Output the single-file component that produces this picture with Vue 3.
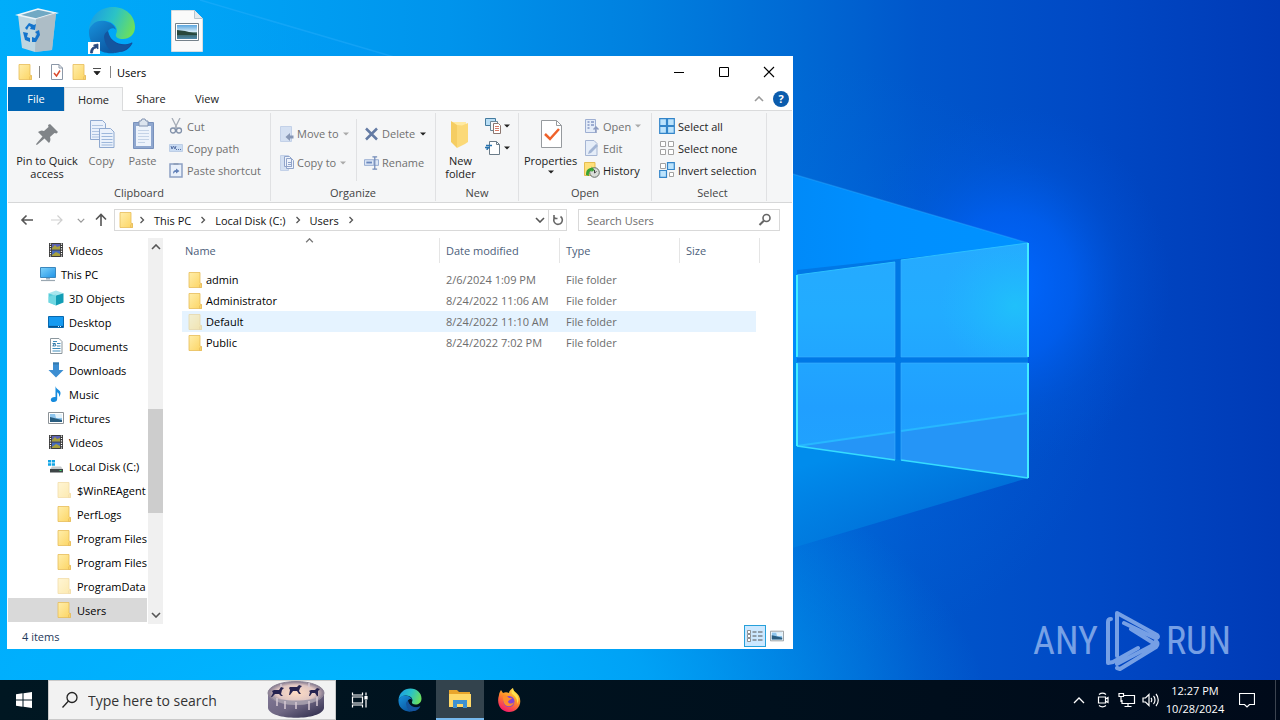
<script setup>
import { ref } from 'vue'

const query = ref('')
const webQuery = ref('')

const tree = [
  { icon: 'video', label: 'Videos', level: 2 },
  { icon: 'pc', label: 'This PC', level: 1 },
  { icon: 'cube', label: '3D Objects', level: 2 },
  { icon: 'desktop', label: 'Desktop', level: 2 },
  { icon: 'document', label: 'Documents', level: 2 },
  { icon: 'download', label: 'Downloads', level: 2 },
  { icon: 'music', label: 'Music', level: 2 },
  { icon: 'picture', label: 'Pictures', level: 2 },
  { icon: 'video', label: 'Videos', level: 2 },
  { icon: 'drive', label: 'Local Disk (C:)', level: 2 },
  { icon: 'folder', label: '$WinREAgent', level: 3, faded: true },
  { icon: 'folder', label: 'PerfLogs', level: 3 },
  { icon: 'folder', label: 'Program Files', level: 3 },
  { icon: 'folder', label: 'Program Files', level: 3 },
  { icon: 'folder', label: 'ProgramData', level: 3, faded: true },
  { icon: 'folder', label: 'Users', level: 3, current: true },
]

const files = [
  { name: 'admin', date: '2/6/2024 1:09 PM' },
  { name: 'Administrator', date: '8/24/2022 11:06 AM' },
  { name: 'Default', date: '8/24/2022 11:10 AM', faded: true, hover: true },
  { name: 'Public', date: '8/24/2022 7:02 PM' },
]

const crumbs = ['This PC', 'Local Disk (C:)', 'Users']
</script>

<template>
  <div class="screen">
    <svg class="sprites" aria-hidden="true">
      <defs>
        <linearGradient id="gFolder" x1="0" y1="0" x2="1" y2="1">
          <stop offset="0" stop-color="#ffeeab" /><stop offset="1" stop-color="#fcd462" />
        </linearGradient>
        <linearGradient id="gBlue" x1="0" y1="0" x2="1" y2="1">
          <stop offset="0" stop-color="#7fd3fb" /><stop offset="1" stop-color="#1f93e6" />
        </linearGradient>
        <linearGradient id="gEdgeTop" x1="0" y1="0.3" x2="1" y2="0.6">
          <stop offset="0" stop-color="#1b9de2" /><stop offset="0.5" stop-color="#2bc3c6" /><stop offset="1" stop-color="#6de05a" />
        </linearGradient>
        <linearGradient id="gEdgeLeft" x1="0" y1="0" x2="0.6" y2="1">
          <stop offset="0" stop-color="#1793dd" /><stop offset="1" stop-color="#0c59a4" />
        </linearGradient>
        <linearGradient id="gFox" x1="0.8" y1="0" x2="0.3" y2="1">
          <stop offset="0" stop-color="#ffe14a" /><stop offset="0.45" stop-color="#ff9127" /><stop offset="1" stop-color="#f5156c" />
        </linearGradient>
        <linearGradient id="gSky" x1="0" y1="0" x2="0" y2="1">
          <stop offset="0" stop-color="#5aa5de" /><stop offset="0.5" stop-color="#d9ecf7" /><stop offset="0.55" stop-color="#375f55" /><stop offset="1" stop-color="#4d87aa" />
        </linearGradient>
        <symbol id="folder" viewBox="0 0 16 16">
          <path d="M2 .5h11v10.500l1.500 1v3.500H2z" fill="url(#gFolder)" stroke="#e7bd59" stroke-width=".8" />
          <path d="M12.500 15.500v-2.500l2-2v4.500z" fill="#f8d170" stroke="#e0b552" stroke-width=".5" />
        </symbol>
        <symbol id="caret" viewBox="0 0 6 4"><path d="M0 .5h6L3 3.500z" fill="currentColor" /></symbol>
        <symbol id="chev" viewBox="0 0 6 8"><path d="M1.500 1l3 3-3 3" fill="none" stroke="currentColor" stroke-width="1.300" /></symbol>
        <symbol id="down" viewBox="0 0 10 6"><path d="M1 1l4 4 4-4" fill="none" stroke="currentColor" stroke-width="1.600" /></symbol>
        <symbol id="up" viewBox="0 0 10 6"><path d="M1 5l4-4 4 4" fill="none" stroke="currentColor" stroke-width="1.600" /></symbol>
        <symbol id="lens" viewBox="0 0 16 16"><circle cx="9.500" cy="6" r="3.500" fill="none" stroke="currentColor" stroke-width="1.600" /><path d="M6.800 8.700L2.500 13" stroke="currentColor" stroke-width="2" /></symbol>
        <symbol id="video" viewBox="0 0 16 16">
          <path d="M1 1h14v14H1z" fill="#3b3b3b" /><path d="M4 2h8v5.500H4z" fill="#5b62b5" /><path d="M4 8.500h8V14H4z" fill="#486bbd" />
          <path d="M4 6l3-3 2 2 3-1v3.500H4zM4 13l4-3 4 2v2H4z" fill="#a8a03c" />
          <path d="M2.500 1.500v13M13.500 1.500v13" stroke="#fff" stroke-width="1.200" stroke-dasharray="1.200 1.200" />
        </symbol>
        <symbol id="pc" viewBox="0 0 16 16"><path d="M.5 1.500h15v10H.5z" fill="url(#gBlue)" stroke="#3b87bd" /><path d="M6 12h4v1.500H6z" fill="#9bb1c2" /><path d="M1 14.500h14" stroke="#9aa7b1" stroke-width="1.200" /></symbol>
        <symbol id="cube" viewBox="0 0 16 16"><path d="M8 .5l7.500 2.700L8 5.500.5 3.200z" fill="#a9e6ee" /><path d="M.5 3.200L8 5.500v10L.5 12.500z" fill="#57cddb" /><path d="M8 5.500l7.500-2.300v9.300L8 15.500z" fill="#129db5" /><path d="M.5 7L8 4v11.500L.5 12.500z" fill="#7edde6" opacity=".6" /></symbol>
        <symbol id="desktop" viewBox="0 0 16 16"><path d="M.5 2.500h15v11H.5z" fill="#159af1" stroke="#0868ae" /><path d="M1 12.500h14" stroke="#07518d" stroke-width="1.200" /><path d="M10 12.500h4" stroke="#d2edff" stroke-dasharray="1 1" /></symbol>
        <symbol id="document" viewBox="0 0 16 16"><path d="M2.500.5H11L14 3.500v12H2.500z" fill="#fff" stroke="#8b979e" /><path d="M4.500 5.500h3M9 5.500h3.500M4.500 8h3M9 8h3.500M4.500 10.500h8M4.500 13h8M5 3.500h4" stroke="#3f8dbc" /><path d="M5 8l1.500-3L8 8" stroke="#286e9d" fill="none" /></symbol>
        <symbol id="download" viewBox="0 0 16 16"><path d="M5 .5h6V8h4.500L8 15.500.5 8H5z" fill="#3c8ed2" /><path d="M5 .5h6v2H5z" fill="#347aae" /></symbol>
        <symbol id="music" viewBox="0 0 16 16"><path d="M7.500 0c.5 3.500 5.500 4 5 7.500-.1 1.500-.8 2.500-1.500 3.500.5-2.500-.3-4-1.800-4.700V13c0 1.700-1.500 3-3.500 3-1.700 0-2.900-.9-2.900-2.300 0-1.700 2-3 4.700-2.700z" fill="#168bdd" /></symbol>
        <symbol id="picture" viewBox="0 0 16 16"><path d="M.5 2.500h15v11H.5z" fill="#fff" stroke="#8c9297" /><path d="M2 4h12v8H2z" fill="#8fc6ee" /><path d="M7 4h7v4H8z" fill="#e3f2fb" /><path d="M2 7l4 1 8 2v2H2z" fill="#295d80" /></symbol>
        <symbol id="drive" viewBox="0 0 16 16"><path d="M0 2h3v2.500H0zM3.700 2H7v2.500H3.700zM0 5.200h3v2.500H0zM3.700 5.200H7v2.500H3.700z" fill="#13a5e5" /><path d="M4 8.500h9l2 3H2z" fill="#c6c9cb" /><path d="M2 11h13v3.500H2z" fill="#3e4547" /><path d="M11.500 12.500h2" stroke="#3cda6c" /></symbol>
        <symbol id="edge" viewBox="0 0 48 48">
          <path d="M1 24C2 10 12 1 25 1c13 0 22 9 22 20 0 8-6 12-12 12-5 0-8-2-7-5 2-3 1-9-6-12C14 13 5 16 1 24z" fill="url(#gEdgeTop)" />
          <path d="M1 24c3-8 11-11 19-8 4 1 7 4 8 8-2-3-6-2-8 1-5 7-1 17 7 22-15 2-27-8-26-23z" fill="url(#gEdgeLeft)" />
          <path d="M20 25c-5 7-1 16 6 19 7 4 14 1 18-6 1-1 0-2-1-1-5 2-12 2-17-2-4-3-7-6-6-10z" fill="#134c9b" />
          <path d="M16 31c1 9 6 14 11 16 8-1 14-5 17-10-7 4-20 4-24-12-2 1-4 3-4 6z" fill="#14559f" />
        </symbol>
        <symbol id="file" viewBox="0 0 16 16"><path d="M2.500.5H10L13.500 4v11.500h-11z" fill="#fff" stroke="#8c98a8" /><path d="M10 .5V4h3.500" fill="none" stroke="#8c98a8" /></symbol>
      </defs>
    </svg>

    <main class="workspace">
      <svg class="wallpaper" viewBox="0 0 1280 720" preserveAspectRatio="none" aria-hidden="true">
        <defs>
          <linearGradient id="wBase" x1="0" y1="0" x2="1" y2="0">
            <stop offset="0" stop-color="#00aefa" /><stop offset=".16" stop-color="#00a4f6" /><stop offset=".35" stop-color="#0094ec" /><stop offset=".5" stop-color="#0080df" />
            <stop offset=".63" stop-color="#0068d3" /><stop offset=".72" stop-color="#0056cb" /><stop offset=".85" stop-color="#0049c5" /><stop offset="1" stop-color="#003ab6" />
          </linearGradient>
          <radialGradient id="wGlow"><stop offset="0" stop-color="#0067ff" /><stop offset=".4" stop-color="#0062f8" stop-opacity=".7" /><stop offset=".7" stop-color="#005ce8" stop-opacity=".25" /><stop offset="1" stop-color="#0056dc" stop-opacity="0" /></radialGradient>
          <radialGradient id="wHaze"><stop offset="0" stop-color="#0070f0" stop-opacity=".55" /><stop offset="1" stop-color="#0068e0" stop-opacity="0" /></radialGradient>
          <radialGradient id="wLow"><stop offset="0" stop-color="#00b8ff" /><stop offset=".5" stop-color="#00b0ff" stop-opacity=".7" /><stop offset="1" stop-color="#00a0f5" stop-opacity="0" /></radialGradient>
          <linearGradient id="wBeam" gradientUnits="userSpaceOnUse" x1="250" y1="0" x2="1028" y2="0"><stop offset="0" stop-color="#0098fa" stop-opacity=".05" /><stop offset=".5" stop-color="#0090fb" stop-opacity=".6" /><stop offset=".8" stop-color="#008fff" /><stop offset="1" stop-color="#0092ff" /></linearGradient>
          <linearGradient id="wBeamLow" gradientUnits="userSpaceOnUse" x1="850" y1="450" x2="900" y2="600"><stop offset="0" stop-color="#008cec" /><stop offset=".5" stop-color="#007ee0" stop-opacity=".7" /><stop offset="1" stop-color="#0078dc" stop-opacity=".1" /></linearGradient>
          <linearGradient id="wPane" x1="0" y1="0" x2="0" y2="1"><stop offset="0" stop-color="#26aaff" /><stop offset=".3" stop-color="#22acff" /><stop offset=".7" stop-color="#209fff" /><stop offset="1" stop-color="#21a4fd" /></linearGradient>
          <radialGradient id="wShine" cx=".9" cy=".55" r=".6"><stop offset="0" stop-color="#20c0fa" /><stop offset="1" stop-color="#20b7ff" stop-opacity="0" /></radialGradient>
        </defs>
        <path d="M0 0h1280v720H0z" fill="url(#wBase)" />
        <ellipse cx="800" cy="360" rx="320" ry="300" fill="url(#wHaze)" />
        <ellipse cx="330" cy="720" rx="660" ry="330" fill="url(#wLow)" />
        <ellipse cx="1010" cy="285" rx="160" ry="180" fill="url(#wGlow)" />
        <path d="M1028 243L200 0H0v430l1028-70z" fill="url(#wBeam)" />
        <path d="M1028 478V360H600v245z" fill="url(#wBeamLow)" />
        <path d="M200 0l828 243" stroke="#3db5ff" stroke-opacity=".3" stroke-width="1.500" fill="none" />
        <path d="M797 270l231-25v232l-231-31z" fill="#0078e6" />
        <path d="M797 275l98-13v95h-98zM901 260l127-17v114H901zM797 363h98v97l-98-14zM901 363h127v115l-127-18z" fill="url(#wPane)" />
        <path d="M901 260l127-17v114H901z" fill="url(#wShine)" />
        <path d="M797 446l98-14v28zM901 431l127-18v65l-127-18z" fill="#2595f7" />
        <path d="M797 446l98-14M901 431l127-18" stroke="#27b8ff" stroke-width="2" />
        <path d="M797 446l98 14M901 460l127 18" stroke="#36dcfe" stroke-width="1.500" />
        <path d="M1028 243l-127 17M895 262l-98 13" stroke="#2cc0ff" />
        <path d="M1028 243v114M1028 363v115M797 275v82M797 363v83" stroke="#44ecff" stroke-width="2" />
        <path d="M797 357h98v-95M901 260v97h127M895 460v-97h-98M1028 363H901v97" fill="none" stroke="#3cb3ff" stroke-opacity=".6" />
      </svg>

      <div class="shortcuts">
        <button class="shortcut" aria-label="Recycle Bin">
          <svg width="48" height="48" viewBox="0 0 48 48">
            <path d="M5 9l20-6 18 4-4 37-17 2-13-4z" fill="#d2dade" opacity=".9" />
            <path d="M5 9l18 4 20-6-18-4z" fill="#71a9c4" stroke="#edf5f9" stroke-width="1.500" />
            <path d="M23 13l20-6-4 37-17 2z" fill="#a9b6bf" opacity=".8" />
            <path d="M12 22l4-5 5 2 2-1-1 6-5-1 1-2-2-1-2 4zM10 26l5 1-1 4 3 1v4l-5-2zM19 36v-5l3 1 2-4-2-2 4-2 1 5-4 7z" fill="#1474cc" />
          </svg>
        </button>
        <button class="shortcut edge-shortcut" aria-label="Microsoft Edge">
          <svg width="48" height="48"><use href="#edge" /></svg>
          <svg class="link-badge" width="12" height="12" viewBox="0 0 12 12"><path d="M0 0h12v12H0z" fill="#fff" /><path d="M2.500 11C2.500 7 4 5 7 4.500L5.500 3 10 2v5L8.500 5.800C5.500 6.500 4.500 8 4.500 11z" fill="#27477e" stroke="#27477e" stroke-width=".8" /></svg>
        </button>
        <button class="shortcut" aria-label="Image file">
          <svg width="48" height="48" viewBox="0 0 48 48">
            <path d="M8.500 4.500h23l8 8v33h-31z" fill="#fafafa" stroke="#d8dde0" /><path d="M31.500 4.500v8h8" fill="#e3e9ed" stroke="#b7c5ce" />
            <path d="M12.500 17.500h23v17h-23z" fill="#fff" stroke="#75818a" /><path d="M14 19h20v14H14z" fill="url(#gSky)" /><path d="M14 24l8 1 12 3v1H14z" fill="#28473c" />
          </svg>
        </button>
      </div>

      <section class="window" aria-label="Users">
        <header class="titlebar">
          <svg width="16" height="16"><use href="#folder" /></svg>
          <i class="bar"></i>
          <button class="quick" aria-label="Properties"><svg width="16" height="16"><use href="#file" /><path d="M5 9l2.500 3L11 6.500" fill="none" stroke="#d9492b" stroke-width="1.500" /></svg></button>
          <button class="quick" aria-label="New folder"><svg width="16" height="16"><use href="#folder" /></svg></button>
          <button class="quick narrow" aria-label="Customize"><svg width="8" height="8" viewBox="0 0 8 8"><path d="M0 .5h8M1 3.500h6L4 7z" stroke="#222" stroke-width=".8" fill="#222" /></svg></button>
          <i class="bar"></i>
          <h1>Users</h1>
          <div class="captions">
            <button aria-label="Minimize"><svg width="12" height="12"><path d="M1 6.500h10" stroke="#000" /></svg></button>
            <button aria-label="Maximize"><svg width="12" height="12"><path d="M1.500 1.500h9v9h-9z" fill="none" stroke="#000" /></svg></button>
            <button aria-label="Close"><svg width="12" height="12"><path d="M1 1l10 10M11 1L1 11" stroke="#000" stroke-width="1.100" /></svg></button>
          </div>
        </header>

        <nav class="tabs">
          <button class="file-tab">File</button>
          <button class="active">Home</button>
          <button>Share</button>
          <button>View</button>
          <span class="grow"></span>
          <button class="mini" aria-label="Collapse ribbon"><svg width="10" height="6" class="grey"><use href="#up" /></svg></button>
          <button class="help" aria-label="Help">?</button>
        </nav>

        <div class="ribbon">
          <section class="group clipboard">
            <div class="tools">
              <button class="big pin"><svg width="32" height="32" viewBox="0 0 32 32"><path d="M19 6l8 8-1.500 1.500-2-.5-4.500 4c1 3 0 5-1 6l-4.500-4.500-7 6-1.500.5.5-1.500 6-7-4.500-4.500c2-1.500 4-2 6-1l4.500-4-.5-2z" fill="#808488" /></svg><span>Pin to Quick access</span></button>
              <button class="big copy off"><svg width="32" height="32" viewBox="0 0 32 32" fill="#eaf1fb" stroke="#8fa9d0"><path d="M4.500 2.500h12l3 3v16h-15z" /><path d="M6 7.500h11M6 10.500h11M6 13.500h11M6 16.500h11M6 19h11" stroke="#b0c5e2" /><path d="M13.500 10.500h11l3.500 3.500v15.500H13.500z" /><path d="M15.500 15.500h11M15.500 18.500h11M15.500 21.500h11M15.500 24.500h11M15.500 27h11" stroke="#9db7db" /></svg><span>Copy</span></button>
              <button class="big paste off"><svg width="32" height="32" viewBox="0 0 32 32"><path d="M6.500 4.500h20v26h-20z" fill="#8fa7cf" stroke="#7891bc" /><path d="M9 8h15v20H9z" fill="#edf3fb" /><path d="M12 3h2l1-2h3l1 2h2v5h-9z" fill="#dce4ee" stroke="#8092b0" /><path d="M11 12.500h11M11 15.500h11M11 18.500h11M11 21.500h11M11 24.500h7" stroke="#c4d3e7" /></svg><span>Paste</span></button>
              <div class="stack">
                <button class="small off"><svg width="16" height="16" viewBox="0 0 16 16" fill="none" stroke="#8392aa" stroke-width="1.300"><path d="M4 0l5.500 11M12 0L6.500 11" stroke="#a5acb6" /><circle cx="5" cy="12.500" r="2.500" /><circle cx="11" cy="12.500" r="2.500" /></svg>Cut</button>
                <button class="small off"><svg width="16" height="16" viewBox="0 0 16 16"><path d="M1.500 4.500h13v7h-13z" fill="#cadcf3" stroke="#bdcee6" /><path d="M3 6l1 3 1.500-3L7 9l1-3" fill="none" stroke="#5771a5" /><path d="M8 9.500h6" stroke="#5771a5" stroke-dasharray="1 1" /></svg>Copy path</button>
                <button class="small off"><svg width="16" height="16" viewBox="0 0 16 16"><path d="M2 2h12v13H2z" fill="#e9f0fa" stroke="#8ca0c4" stroke-width="1.500" /><path d="M5.500 1h5v2h-5z" fill="#91a1bb" /><path d="M5 12c0-3 1-4 3-4V6.500L11.500 9 8 11.500V10c-1 0-2 .5-3 2z" fill="#6281b8" /></svg>Paste shortcut</button>
              </div>
            </div>
            <h2>Clipboard</h2>
          </section>

          <section class="group organize">
            <div class="tools">
              <div class="stack wide">
                <button class="small off"><svg width="14" height="16" viewBox="0 0 14 16"><path d="M.5.5h11v15H.5z" fill="#d4e0f2" stroke="#c3d1e8" /><path d="M13.500 9.500v3H10V15l-4.500-4L10 7v2.500z" fill="#8797b5" /></svg>Move to<svg class="arr" width="6" height="4"><use href="#caret" /></svg></button>
                <button class="small off"><svg width="14" height="16" viewBox="0 0 14 16"><path d="M.5.5h8v15h-8z" fill="#d4e0f2" stroke="#c3d1e8" /><path d="M4.500 1.500h5l2 2v8h-7zM6.500 3.500h5l2 2v8h-7z" fill="#eef3fb" stroke="#91a4ca" /><path d="M8 7.500h4M8 9.500h4M8 11.500h4" stroke="#91a4ca" /></svg>Copy to<svg class="arr" width="6" height="4"><use href="#caret" /></svg></button>
              </div>
              <div class="stack wide second">
                <button class="small off dark-arr"><svg width="15" height="14" viewBox="0 0 14 14"><path d="M1.500 1.500l11 11M12.500 1.500l-11 11" stroke="#647ba4" stroke-width="2.500" /></svg>Delete<svg class="arr" width="6" height="4"><use href="#caret" /></svg></button>
                <button class="small off"><svg width="15" height="16" viewBox="0 0 16 16"><path d="M.5 4.500h10v6H.5zM11 4.500h4.500v6H11" fill="#dce7f6" stroke="#91a7cf" /><path d="M2.500 7.500h6" stroke="#6a87bc" stroke-width="2" /><path d="M9 1.500h5M11.500 1.500v13M9 14.500h5" stroke="#7089b7" stroke-width="1.300" /></svg>Rename</button>
              </div>
            </div>
            <h2>Organize</h2>
          </section>

          <section class="group new">
            <div class="tools">
              <button class="big"><svg width="32" height="32" viewBox="0 0 32 32"><path d="M6 4h15v21H7z" fill="#ffeaa2" /><path d="M6 3l6 4v23l-6-6z" fill="#f5cd62" /><path d="M12 7l5 .5L23 5v19l-3 2-8 4z" fill="#fbd978" /></svg><span>New folder</span></button>
              <div class="stack">
                <button class="small" aria-label="New item"><svg width="16" height="16" viewBox="0 0 16 16"><path d="M.5.5h10v7H.5z" fill="#b9def5" stroke="#447b9f" /><path d="M5.500 3.500h7v9h-7z" fill="#f7f9fb" stroke="#6d8797" /><path d="M8.500 5.500h5l2 2v8h-7z" fill="#fff" stroke="#8c7770" /><path d="M10 8.500h4M10 10.500h4M10 12.500h4" stroke="#da7a65" /></svg><svg class="arr" width="6" height="4"><use href="#caret" /></svg></button>
                <button class="small" aria-label="Easy access"><svg width="16" height="16" viewBox="0 0 16 16"><path d="M4.500 1.500h7l3 3v10h-10z" fill="#fff" stroke="#6b7c89" /><path d="M11.500 1.500v3h3" fill="none" stroke="#6b7c89" /><path d="M1 5.500h6M0 7.500h5M2 10c0-2 1-2.500 3-2.500" stroke="#2873ae" stroke-width="1.300" fill="none" /></svg><svg class="arr" width="6" height="4"><use href="#caret" /></svg></button>
              </div>
            </div>
            <h2>New</h2>
          </section>

          <section class="group open">
            <div class="tools">
              <button class="big props"><svg width="32" height="32" viewBox="0 0 32 32"><path d="M6.500 2.500h15l5 5v22h-20z" fill="#fff" stroke="#969a9e" /><path d="M21.500 2.500v5h5" fill="none" stroke="#969a9e" /><path d="M10 16l5 5 9-10" fill="none" stroke="#ef622b" stroke-width="2.500" /></svg><span>Properties</span><svg width="6" height="4"><use href="#caret" /></svg></button>
              <div class="stack">
                <button class="small off"><svg width="16" height="16" viewBox="0 0 16 16"><path d="M1.500 1.500h10v13h-10z" fill="#e4ecf8" stroke="#9eafd2" /><path d="M3.500 4h2M7 4h3M3.500 7h2M7 7h3M3.500 10h2" stroke="#8497c4" stroke-width="1.500" /><path d="M12 15V9M9.500 11.500L12 9l2.500 2.500" fill="none" stroke="#8d9cc1" stroke-width="1.500" /></svg>Open<svg class="arr" width="6" height="4"><use href="#caret" /></svg></button>
                <button class="small off"><svg width="16" height="16" viewBox="0 0 16 16"><path d="M1.500.5H10L13 3.500v12H1.500z" fill="#e5edf8" stroke="#a5b5d3" /><path d="M4 14l1-3 7-7 2 2-7 7z" fill="#a3b5d4" /></svg>Edit</button>
                <button class="small"><svg width="16" height="16" viewBox="0 0 16 16"><path d="M.5.5H11v13H.5z" fill="#ffe07a" stroke="#e5bd51" /><circle cx="10.500" cy="10.500" r="4.800" fill="#d9ddd9" stroke="#666f69" /><path d="M10.500 8v3l2-1.500" fill="none" stroke="#444" /><path d="M2 13c0-5 2-7 5.500-7V4.500L10.500 8 7.500 10V8.500C5 9 4.500 11 5 14z" fill="#39a334" /></svg>History</button>
              </div>
            </div>
            <h2>Open</h2>
          </section>

          <section class="group select">
            <div class="tools">
              <div class="stack">
                <button class="small"><svg width="16" height="16" viewBox="0 0 16 16"><path d="M.7.7h6.800v6.800H.7zM8.500.7h6.800v6.800H8.500zM.7 8.500h6.800v6.800H.7zM8.500 8.500h6.800v6.800H8.500z" fill="#bce3fc" stroke="#3385c9" stroke-width="1.200" /></svg>Select all</button>
                <button class="small"><svg width="16" height="16" viewBox="0 0 16 16"><path d="M1.500 1.500h5v5h-5zM9.500 1.500h5v5h-5zM1.500 9.500h5v5h-5zM9.500 9.500h5v5h-5z" fill="#fff" stroke="#a2a2a2" /></svg>Select none</button>
                <button class="small"><svg width="16" height="16" viewBox="0 0 16 16"><path d="M1.500 1.500h5v5h-5zM10.500 10.500h4v4h-4z" fill="#fff" stroke="#a2a2a2" /><path d="M8.500.7h6.800v6.800H8.500zM.7 8.500h6.800v6.800H.7z" fill="#bce3fc" stroke="#3385c9" stroke-width="1.200" /></svg>Invert selection</button>
              </div>
            </div>
            <h2>Select</h2>
          </section>
        </div>

        <div class="location">
          <button aria-label="Back"><svg width="14" height="12" viewBox="0 0 14 12"><path d="M13 6H2M6.500 1.500L2 6l4.500 4.500" fill="none" stroke="#555" stroke-width="1.600" /></svg></button>
          <button class="forward" aria-label="Forward"><svg width="14" height="12" viewBox="0 0 14 12"><path d="M1 6h11M7.500 1.500L12 6l-4.500 4.500" fill="none" stroke="#cfcfcf" stroke-width="1.200" /></svg></button>
          <button class="recent" aria-label="Recent locations"><svg width="8" height="5" class="grey"><use href="#down" /></svg></button>
          <button class="parent" aria-label="Up"><svg width="12" height="14" viewBox="0 0 12 14"><path d="M6 13V2M1 6.500L6 1.500l5 5" fill="none" stroke="#555" stroke-width="1.600" /></svg></button>
          <div class="address">
            <svg width="16" height="16"><use href="#folder" /></svg>
            <svg class="sep first" width="6" height="8"><use href="#chev" /></svg>
            <template v-for="crumb in crumbs" :key="crumb">
              <button class="crumb">{{ crumb }}</button><svg class="sep" width="6" height="8"><use href="#chev" /></svg>
            </template>
            <button class="history" aria-label="Previous locations"><svg width="10" height="6"><use href="#down" /></svg></button>
            <button class="refresh" aria-label="Refresh"><svg width="12" height="12" viewBox="0 0 12 12"><path d="M8.500 2.500A4.300 4.300 0 1 1 3 3M2 1v3.500h3.500" fill="none" stroke="#666" stroke-width="1.600" /></svg></button>
          </div>
          <label class="search"><input v-model="query" type="text" placeholder="Search Users" aria-label="Search Users" /><svg width="16" height="16"><use href="#lens" /></svg></label>
        </div>

        <div class="body">
          <aside class="tree">
            <a v-for="(node, i) in tree" :key="i" href="#" :class="['node', 'level' + node.level, { current: node.current, faded: node.faded }]">
              <svg width="16" height="16"><use :href="'#' + node.icon" /></svg><span>{{ node.label }}</span>
            </a>
          </aside>
          <div class="scroll">
            <svg width="10" height="6"><use href="#up" /></svg>
            <div class="track"><div class="thumb"></div></div>
            <svg width="10" height="6"><use href="#down" /></svg>
          </div>
          <div class="listing">
            <table>
              <colgroup><col class="c-name" /><col class="c-mid" /><col class="c-mid" /><col class="c-size" /></colgroup>
              <thead>
                <tr>
                  <th><span>Name</span><svg class="sort" width="9" height="5"><use href="#up" /></svg></th>
                  <th><span>Date modified</span></th><th><span>Type</span></th><th><span>Size</span></th>
                </tr>
              </thead>
              <tbody>
                <tr v-for="file in files" :key="file.name" :class="{ hover: file.hover, faded: file.faded }">
                  <td class="name"><svg width="16" height="16"><use href="#folder" /></svg>{{ file.name }}</td>
                  <td>{{ file.date }}</td><td>File folder</td><td></td>
                </tr>
              </tbody>
            </table>
          </div>
        </div>

        <footer class="status">
          <span>4 items</span>
          <button class="view on" aria-label="Details view"><svg width="16" height="14" viewBox="0 0 16 14"><path d="M.5 1.500h3v3h-3zM.5 5.500h3v3h-3zM.5 9.500h3v3h-3z" fill="#fff" stroke="#777" stroke-width=".8" /><path d="M5.500 3h4M11 3h4.500M5.500 7h4M11 7h4.500M5.500 11h4M11 11h4.500" stroke="#555" /></svg></button>
          <button class="view" aria-label="Large icons view"><svg width="14" height="14"><use href="#picture" /></svg></button>
        </footer>
      </section>

      <div class="brand">
        <span>ANY</span>
        <svg width="56" height="62" viewBox="0 0 56 62" fill="none" stroke="#8bb0ec" stroke-width="4" stroke-linejoin="round" stroke-linecap="round">
          <path d="M7 9c-2 0-3 1-3 3v41l5-1L34 38M13 46V3l40 22c2 2 0 4-2 3L20 13M13 54l38-20-24-15M13 58l3 1 36-22c2-2 2-4 0-6" />
        </svg>
        <span>RUN</span>
      </div>
    </main>

    <footer class="taskbar">
      <button class="start" aria-label="Start"><svg width="16" height="16" viewBox="0 0 16 16"><path d="M0 2.200l6.500-.9v6.200H0zM7.500 1.200L16 0v7.500H7.500zM0 8.500h6.500v6.200L0 13.800zM7.500 8.500H16V16l-8.500-1.200z" fill="#fff" /></svg></button>
      <label class="web-search">
        <svg width="18" height="18" viewBox="0 0 18 18"><circle cx="11" cy="6.500" r="5" fill="none" stroke="#222" stroke-width="1.300" /><path d="M7.500 10L1.500 16.500" stroke="#222" stroke-width="1.300" /></svg>
        <input v-model="webQuery" type="text" placeholder="Type here to search" aria-label="Type here to search" />
        <svg class="drum" width="58" height="38" viewBox="0 0 58 38">
          <defs><linearGradient id="gDrum" x1="0" x2="1" y1="0" y2="1"><stop offset="0" stop-color="#817896" /><stop offset=".5" stop-color="#6f6783" /><stop offset="1" stop-color="#272546" /></linearGradient>
            <radialGradient id="gRim"><stop offset="0" stop-color="#ffdcc4" /><stop offset=".7" stop-color="#dfc6c3" /><stop offset="1" stop-color="#83788f" /></radialGradient></defs>
          <path d="M1 12v15c2 13 54 13 56 0V12z" fill="url(#gDrum)" />
          <ellipse cx="29" cy="12" rx="28" ry="11.500" fill="url(#gRim)" stroke="#8c8395" />
          <path d="M4 15c8 6 42 6 50 0-6 12-44 12-50 0z" fill="#a29baa" />
          <path d="M10 17v8M18 20v8M29 21v7M42 20v9M50 16v9M14 3v4M42 2v4" stroke="#d6c9d4" stroke-width="1.500" />
          <path d="M5 10l2-1h5l2-3 3 1-2 2-1 4 2 2h-2l-2-2-4 0-3 3H4l2-4zM22 7l1-1h7l2-2 3 1-2 2-1 3 2 3h-2l-2-3h-4l-3 4h-1l1-5zM42 10l2-1h4l2-2 3 1-2 2v5h-1l-2-3h-3l-2 3h-1l1-4z" fill="#262350" />
        </svg>
      </label>
      <button aria-label="Task View"><svg width="18" height="16" viewBox="0 0 18 16" fill="none" stroke="#fff" stroke-width="1.200"><path d="M1.500.5v2.500h10V.5M1.500 5h10v6h-10zM1.500 15.500V13h10v2.500M15 .5v3M15 8v7.500" /><path d="M14 4.500h2v2.500h-2z" fill="#fff" /></svg></button>
      <button class="app" aria-label="Microsoft Edge"><svg width="24" height="24"><use href="#edge" /></svg></button>
      <button class="app running" aria-label="File Explorer"><svg width="22" height="20" viewBox="0 0 22 20"><path d="M0 1h8l2 2h11v15H0z" fill="#e9a52b" /><path d="M0 5h22v13H0z" fill="#ffd867" /><path d="M4 19v-8h14v8h-4v-4H8v4z" fill="#3e91cf" /></svg></button>
      <button class="app" aria-label="Firefox"><svg width="24" height="24" viewBox="0 0 24 24"><path d="M2 7c0-2 1-3 2-5l2 3c2-1 4-1 6 0 0-2 2-4 4-5 0 4 4 4 6 8 4 8-2 16-10 16C4 24-1 16 2 7z" fill="url(#gFox)" /><circle cx="12" cy="13.500" r="5.500" fill="#8343d5" /><path d="M6 8c3-1 4 0 6 2h3c-1 2-4 2-4 4 1 2 4 2 6 0-1 5-8 6-10 1-1-2-1-5-1-7z" fill="#ff8e2b" /><path d="M16 0c0 4 4 5 5 9 1 3 0 5-1 7 1-5-2-8-5-10-1-2 0-4 1-6z" fill="#ffe04d" /></svg></button>
      <span class="grow"></span>
      <div class="tray">
        <button aria-label="Show hidden icons"><svg width="12" height="8" viewBox="0 0 12 8"><path d="M1 7l5-5 5 5" fill="none" stroke="#fff" stroke-width="1.300" /></svg></button>
        <button aria-label="Meet Now"><svg width="14" height="16" viewBox="0 0 14 16" fill="none" stroke="#fff" stroke-width="1.200"><path d="M2.500 5h7v6h-7zM9.500 7l2.500-1.500v5L9.500 9M3 2.500c2-1.500 5-1.500 7 0M3 13.500c2 1.500 5 1.500 7 0" /></svg></button>
        <button aria-label="Network"><svg width="18" height="16" viewBox="0 0 18 16" fill="none" stroke="#fff" stroke-width="1.200"><path d="M5 3.500h11.500v8H4V8M10 11.500v3M6.500 14.500h7M1 1.500h4.500v3H1zM3 4.500V10" /></svg></button>
        <button aria-label="Volume"><svg width="18" height="16" viewBox="0 0 18 16" fill="none" stroke="#fff" stroke-width="1.200"><path d="M1 6h2.500L7 2.500v11L3.500 10H1zM9 6c1 1 1 3 0 4M11.500 4c2 2 2 6 0 8M14 2c3 3.500 3 8.500 0 12" /></svg></button>
      </div>
      <time class="clock"><span>12:27 PM</span><span>10/28/2024</span></time>
      <button class="notes" aria-label="Notifications"><svg width="16" height="16" viewBox="0 0 16 16"><path d="M.5 1.500h15v11h-5L8 15l-2.500-2.500h-5z" fill="none" stroke="#fff" stroke-width="1.200" /></svg></button>
      <i class="peek"></i>
    </footer>
  </div>
</template>

<style>
html, body { margin: 0; height: 100%; }
</style>

<style scoped>
.screen { height: 100vh; display: flex; flex-direction: column; overflow: hidden; font-family: "Open Sans", "Noto Sans", sans-serif; font-size: 11px; color: #000; }
.screen * { box-sizing: border-box; }
svg { flex: none; display: block; }
button { border: 0; margin: 0; padding: 0; background: none; font: inherit; color: inherit; display: flex; align-items: center; justify-content: center; white-space: nowrap; }
input { border: 0; outline: 0; padding: 0; background: none; font: inherit; min-width: 0; flex: 1; }
a { color: inherit; text-decoration: none; }
h1, h2 { margin: 0; font: inherit; }
.sprites { position: absolute; width: 0; height: 0; }
.grow { flex: 1; }
.grey { color: #999; }

.workspace { position: relative; flex: 1; min-height: 0; background: #0078dd; }
.wallpaper { position: absolute; top: 0; left: 0; width: 100%; height: 100vh; }
.shortcuts { position: relative; display: flex; gap: 27px; padding: 6px 13px; }
.edge-shortcut { position: relative; }
.link-badge { position: absolute; left: 0; bottom: 0; }

.window { position: absolute; inset: 56px 487px 31px 7px; padding: 1px; background: #fff; display: flex; flex-direction: column; }
.titlebar { height: 30px; display: flex; align-items: center; padding-left: 9px; }
.bar { width: 1px; height: 12px; background: #888; margin: 0 6px; }
.quick { width: 22px; height: 22px; }
.quick.narrow { width: 14px; }
.captions { display: flex; margin-left: auto; margin-right: 1px; }
.captions button { width: 45px; height: 28px; }

.tabs { height: 24px; display: flex; align-items: center; color: #222; border-bottom: 1px solid #dadbdc; }
.tabs button { width: 56px; height: 24px; }
.tabs .file-tab { background: #0063b1; color: #fff; }
.tabs .active { width: 59px; background: #f5f6f7; border: 1px solid #dadbdc; border-bottom: 0; }
.tabs .mini { width: 20px; }
.tabs .help { width: 16px; height: 16px; margin: 0 3px 0 4px; border-radius: 50%; background: #0b5cad; color: #fff; font-weight: 700; }

.ribbon { height: 92px; display: flex; background: #f5f6f7; border-bottom: 1px solid #d6d7d8; }
.group { display: flex; flex-direction: column; border-right: 1px solid #e0e1e3; margin: 2px 0 1px; }
.group h2 { text-align: center; line-height: 16px; color: #444; }
.tools { display: flex; flex: 1; }
.clipboard { width: 263px; }
.organize { width: 165px; }
.new { width: 83px; }
.open { width: 133px; }
.select { width: 115px; padding-left: 7px; }
.big { flex-direction: column; justify-content: flex-start; padding-top: 5px; width: 49px; color: #222; }
.big span { white-space: normal; line-height: 13px; margin: 4px 0 3px; }
.pin { width: 78px; padding-left: 8px; padding-right: 8px; }
.copy { width: 31px; }
.paste { width: 51px; }
.props { width: 63px; }
.stack { display: flex; flex-direction: column; padding-top: 2px; align-items: flex-start; }
.small { height: 22px; gap: 3px; color: #222; }
.off { color: #707070; }
.small .arr { margin-left: 1px; }
.off .arr { color: #aaa; }
.dark-arr .arr { margin-left: 2px; color: #222; }
.new .arr { margin: 0; }
.wide { width: 85px; padding: 6px 0 0 9px; }
.wide .small { height: 29px; }
.second { width: 79px; padding-left: 7px; margin: 6px 0 4px; padding-top: 0; border-left: 1px solid #e0e1e3; }
.open .stack { padding-left: 2px; }

.location { height: 34px; display: flex; align-items: center; padding: 0 12px 0 12px; color: #444; }
.forward { margin-left: 16px; }
.recent { margin-left: 13px; }
.parent { margin: 0 7px 0 10px; }
.address { flex: 1; display: flex; align-items: center; height: 22px; padding-left: 3px; border: 1px solid #d9d9d9; color: #555; }
.crumb { color: #111; margin: 0 9px; }
.sep.first { margin-left: 5px; }
.history { margin-left: auto; width: 16px; }
.refresh { width: 18px; height: 20px; border-left: 1px solid #d9d9d9; }
.search { width: 202px; height: 22px; display: flex; align-items: center; margin-left: 11px; padding: 0 6px 0 8px; border: 1px solid #d9d9d9; color: #666; }
.search input::placeholder { color: #6d6d6d; opacity: 1; }

.body { flex: 1; display: flex; min-height: 0; padding-top: 1px; }
.tree { width: 139px; overflow: hidden; }
.node { display: flex; align-items: center; gap: 5px; height: 24px; white-space: nowrap; }
.level1 { padding-left: 32px; }
.level2 { padding-left: 40px; }
.level3 { padding-left: 48px; }
.current { background: #d9d9d9; }
.faded svg { opacity: .5; }
.scroll { width: 15px; margin-left: 1px; display: flex; flex-direction: column; align-items: center; padding: 6px 0; background: #f0f0f0; color: #555; }
.track { flex: 1; width: 100%; display: flex; flex-direction: column; }
.thumb { margin-top: auto; margin-bottom: 99px; height: 104px; background: #cdcdcd; }
.listing { flex: 1; min-width: 0; padding-left: 19px; }
table { table-layout: fixed; width: 578px; border-spacing: 0; }
.c-name { width: 258px; }
.c-mid { width: 120px; }
th { position: relative; height: 31px; padding: 0 0 6px; text-align: left; font-weight: 400; color: #4c607a; }
th span { display: block; line-height: 25px; padding-left: 6px; border-right: 1px solid #e5e5e5; }
th:first-child span { padding-left: 3px; }
.sort { position: absolute; top: 0; left: 123px; color: #777; }
td { height: 21px; padding: 0 0 0 6px; color: #6d6d6d; white-space: nowrap; }
td.name { display: flex; align-items: center; gap: 3px; padding-left: 5px; color: #000; }
td:last-child { border-right: 4px solid #fff; }
.hover td { background: #e5f3ff; }

.status { height: 24px; display: flex; align-items: center; padding: 0 4px 0 14px; color: #1e395b; }
.status span { flex: 1; }
.view { width: 22px; height: 22px; }
.view.on { background: #cce8ff; border: 1px solid #26a0da; }

.brand { position: absolute; right: 49px; bottom: 8px; display: flex; align-items: center; gap: 6px; color: #8bb0ec; font: 38px "Roboto Condensed", "Liberation Sans Narrow", "Liberation Sans", sans-serif; opacity: .85; }

.taskbar { position: relative; height: 40px; display: flex; background: linear-gradient(90deg, #001722, #00101d 60%, #000a1a); color: #fff; }
.taskbar button { width: 48px; }
.web-search { width: 288px; display: flex; align-items: center; gap: 9px; padding: 0 10px 0 12px; background: #f2f2f2; border: 1px solid #c9c9c9; }
.web-search input { font-size: 14px; }
.web-search input::placeholder { color: #333; opacity: 1; }
.taskbar .app { width: 52px; }
.taskbar .running { width: 48px; background: #33434d; border-bottom: 2px solid #76b9ed; }
.taskbar .running + .app { width: 49px; }
.tray { display: flex; }
.taskbar .tray button { width: 24px; }
.clock { width: 64px; display: flex; flex-direction: column; justify-content: center; text-align: center; line-height: 18px; }
.taskbar .notes { width: 40px; }
.peek { width: 1px; background: #3c4450; margin: 0 4px 0 8px; }
</style>
